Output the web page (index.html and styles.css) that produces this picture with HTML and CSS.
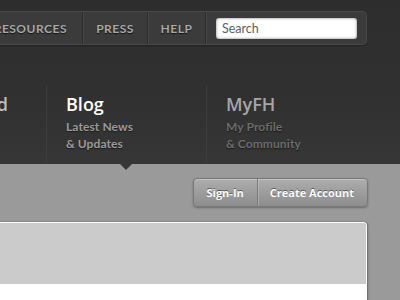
FILE: index.html
```html
<!DOCTYPE html>
<html lang="en">
<head>
<meta charset="utf-8">
<title>MyFH</title>
<link rel="stylesheet" href="styles.css">
</head>
<body>
<header class="masthead">
  <nav class="topnav">
    <div class="topbar">
      <a class="tl" href="#">RESOURCES</a>
      <a class="tl tl-press" href="#">PRESS</a>
      <a class="tl tl-help" href="#">HELP</a>
      <div class="search"><input class="search-input" type="text" placeholder="Search"></div>
    </div>
  </nav>
  <nav class="mainnav">
    <a class="mi first" href="#"><span class="mi-inner"><span class="mt">Featured</span><span class="ms">Our Picks</span><span class="ms">&amp; More</span></span></a>
    <a class="mi active" href="#"><span class="mi-inner"><span class="mt">Blog</span><span class="ms">Latest News</span><span class="ms">&amp; Updates</span></span></a>
    <a class="mi dim" href="#"><span class="mi-inner"><span class="mt">MyFH</span><span class="ms">My Profile</span><span class="ms">&amp; Community</span></span></a>
  </nav>
</header>
<main class="content">
  <div class="actions">
    <div class="btn-group">
      <a class="btn" href="#">Sign-In</a>
      <a class="btn" href="#">Create Account</a>
    </div>
  </div>
  <section class="panel">
    <div class="panel-head"></div>
    <div class="panel-body"></div>
  </section>
</main>
</body>
</html>
```
FILE: styles.css
```css
html, body {
  margin: 0;
  padding: 0;
}
body {
  background: #9a9a9a;
  font-family: "Open Sans", "DejaVu Sans", sans-serif;
  overflow: hidden;
  width: 400px;
  height: 300px;
}
a { text-decoration: none; }

.masthead {
  background: linear-gradient(#2d2d2d 0%, #303030 55%, #363636 100%);
  height: 164px;
  position: relative;
  z-index: 2;
}

.topnav {
  display: flex;
  justify-content: flex-end;
  padding: 11px 33px 0 0;
}
.topbar {
  flex: none;
  display: flex;
  height: 32px;
  background: #3b3b3b;
  border: 1px solid #474747;
  border-radius: 4px;
  box-shadow: 0 1px 1px rgba(0,0,0,.25);
}
.tl {
  display: block;
  padding: 0 15px 0 14px;
  line-height: 33px;
  font-family: "Lato", "Open Sans", sans-serif;
  font-size: 12px;
  font-weight: 700;
  letter-spacing: 0.5px;
  color: #a8a8a8;
  text-shadow: 0 1px 1px rgba(0,0,0,.7);
  border-right: 1px solid #2c2c2c;
  box-shadow: 1px 0 0 #474747;
  text-align: center;
}
.tl-press { width: 64px; padding: 0; }
.tl-help { width: 57px; padding: 0; }
.search {
  display: flex;
  align-items: center;
  padding: 0 9px 0 10px;
}
.search-input {
  width: 141px;
  height: 21px;
  box-sizing: border-box;
  border: none;
  border-radius: 3px;
  background: #fff;
  box-shadow: inset 0 0 3px rgba(0,0,0,.55);
  padding: 0 6px;
  font-family: "Lato", "Open Sans", sans-serif;
  font-size: 12.5px;
  color: #555;
  outline: none;
}
.search-input::placeholder { color: #5e5e5e; }

.mainnav {
  display: grid;
  grid-template-columns: 46px 160px 160px;
  margin-top: 40px;
  height: 78px;
}
.mi {
  display: flex;
  padding: 8px 20px 0 19px;
  border-left: 1px solid #3d3d3d;
  position: relative;
}
.mi.first {
  border-left: none;
  justify-content: flex-end;
  padding: 8px 38px 0 0;
}
.mi-inner {
  display: flex;
  flex-direction: column;
  flex: none;
}
.mt {
  font-size: 18px;
  line-height: 22px;
  font-weight: 600;
  color: #bdbdbd;
  margin-bottom: 3px;
  white-space: nowrap;
}
.ms {
  font-family: "Lato", "Open Sans", sans-serif;
  font-size: 12px;
  line-height: 17px;
  font-weight: 700;
  letter-spacing: 0.1px;
  color: #9b9b9b;
  white-space: nowrap;
  text-shadow: 0 1px 1px rgba(0,0,0,.5);
}
.mi.active .mt { color: #fff; }
.mi.dim .mt { color: #a6a6a6; }
.mi.dim .ms { color: #6c6c6c; }
.mi.active::after {
  content: "";
  position: absolute;
  top: 100%;
  left: 50%;
  margin-left: -8px;
  border-left: 7px solid transparent;
  border-right: 7px solid transparent;
  border-top: 7px solid #363636;
}

.content {
  padding-top: 14px;
}
.actions {
  display: flex;
  justify-content: flex-end;
  padding-right: 32px;
}
.btn-group {
  display: flex;
  height: 27px;
  border: 1px solid #787878;
  border-radius: 4px;
  background: linear-gradient(#adadad, #8d8d8d);
  box-shadow: 0 1px 2px rgba(0,0,0,.3), inset 0 1px 0 rgba(255,255,255,.25);
}
.btn {
  display: block;
  padding: 0 13px 0 12px;
  line-height: 27px;
  font-size: 11px;
  font-weight: 700;
  color: #fafafa;
  text-shadow: 0 -1px 0 rgba(0,0,0,.45);
}
.btn + .btn {
  border-left: 1px solid #7c7c7c;
  box-shadow: inset 1px 0 0 rgba(255,255,255,.2);
}

.panel {
  margin: 15px 33px 0 -10px;
  border-top: 1px solid #fff;
  border-right: 1px solid #fff;
  border-radius: 0 4px 0 0;
  box-shadow: 1px 0 2px rgba(0,0,0,.35);
  overflow: hidden;
}
.panel-head {
  height: 61px;
  background: #cbcbcb;
}
.panel-body {
  height: 40px;
  background: #fff;
}
```
